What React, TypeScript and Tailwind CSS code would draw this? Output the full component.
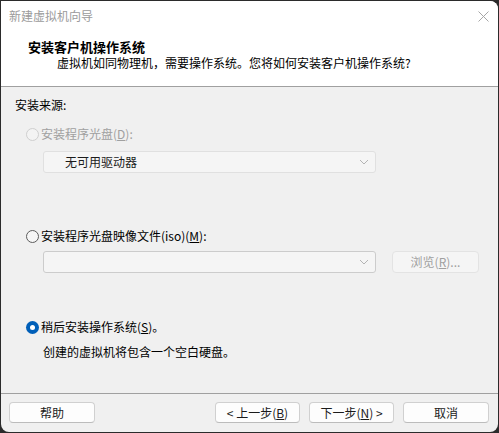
import React from 'react'

const font = { fontFamily: '"Noto Sans CJK SC", "Noto Sans", sans-serif' }

function Radio({ checked, disabled }: { checked?: boolean; disabled?: boolean }) {
  if (checked) {
    return (
      <span className="flex size-[13px] shrink-0 items-center justify-center rounded-full bg-[#005fb8]">
        <span className="size-[5px] rounded-full bg-white" />
      </span>
    )
  }
  return (
    <span
      className={`size-[13px] shrink-0 rounded-full border ${
        disabled ? 'border-[#cfcfcf] bg-[#f3f3f3]' : 'border-[#5c5c5c] bg-[#f6f6f6]'
      }`}
    />
  )
}

function Chevron() {
  return (
    <svg width="10" height="6" viewBox="0 0 10 6" className="shrink-0">
      <path d="M1 1 L5 5 L9 1" fill="none" stroke="#b4b4b4" strokeWidth="1" />
    </svg>
  )
}

function Btn({ children, w = 'w-[86px]' }: { children: React.ReactNode; w?: string }) {
  return (
    <div
      className={`${w} flex h-[21px] items-center justify-center rounded-[4px] border border-[#d0d0d0] border-b-[#bcbcbc] bg-[#fdfdfd] text-[12px] leading-none text-[#1b1b1b]`}
    >
      {children}
    </div>
  )
}

export default function App() {
  return (
    <div className="h-[433px] w-[499px] bg-[#2b2b2b] p-[1px]" style={font}>
      <div className="flex h-full w-full flex-col overflow-hidden rounded-tr-[8px] rounded-b-[8px] bg-[#f0f0f0]">
        {/* title bar + header */}
        <div className="bg-white">
          <div className="flex h-[30px] items-center justify-between pl-[8px] pr-[9px]">
            <span className="text-[12px] text-[#9b9b9b]">新建虚拟机向导</span>
            <svg width="11" height="11" viewBox="0 0 11 11">
              <path d="M0.5 0.5 L10.5 10.5 M10.5 0.5 L0.5 10.5" stroke="#a6a6a6" strokeWidth="1" />
            </svg>
          </div>
          <div className="h-[56px] border-b border-[#a0a0a0] pt-[8px]">
            <div className="pl-[27px] text-[13px] font-bold leading-[16px] text-black">安装客户机操作系统</div>
            <div className="pl-[56px] text-[12px] leading-[16px] text-black">
              虚拟机如同物理机，需要操作系统。您将如何安装客户机操作系统?
            </div>
          </div>
        </div>

        {/* body */}
        <div className="flex-1 text-[12px] leading-[16px] text-black">
          <div className="mt-[10px] pl-[14px]">安装来源:</div>

          <div className="mt-[13px] flex items-center gap-[2px] pl-[25px] text-[#a0a0a0]">
            <Radio disabled />
            <span>
              安装程序光盘(<span className="underline">D</span>):
            </span>
          </div>
          <div className="ml-[42px] mt-[9px] flex h-[22px] w-[333px] items-center justify-between rounded-[3px] border border-[#e0e0e0] bg-[#f5f5f5] pl-[21px] pr-[6px]">
            <span className="text-[#1b1b1b]">无可用驱动器</span>
            <Chevron />
          </div>

          <div className="mt-[55px] flex items-center gap-[2px] pl-[25px]">
            <Radio />
            <span>
              安装程序光盘映像文件(iso)(<span className="underline">M</span>):
            </span>
          </div>
          <div className="ml-[42px] mt-[7px] flex items-center gap-[16px]">
            <div className="flex h-[22px] w-[333px] items-center justify-end rounded-[3px] border border-[#cccccc] bg-[#f5f5f5] pr-[6px]">
              <Chevron />
            </div>
            <div className="flex h-[22px] w-[87px] items-center justify-center rounded-[4px] border border-[#e3e3e3] bg-[#f5f5f5] text-[#a0a0a0]">
              浏览(<span className="underline">R</span>)...
            </div>
          </div>

          <div className="mt-[46px] flex items-center gap-[2px] pl-[25px]">
            <Radio checked />
            <span>
              稍后安装操作系统(<span className="underline">S</span>)。
            </span>
          </div>
          <div className="ml-[42px] mt-[9px]">创建的虚拟机将包含一个空白硬盘。</div>
        </div>

        {/* footer */}
        <div className="flex h-[39px] border-t border-[#a0a0a0] pt-[8px] pl-[8px] pr-[9px]">
          <Btn>帮助</Btn>
          <div className="ml-auto flex gap-[9px]">
            <Btn w="w-[85px]">
              &lt; 上一步(<span className="underline">B</span>)
            </Btn>
            <Btn w="w-[85px]">
              下一步(<span className="underline">N</span>) &gt;
            </Btn>
            <Btn w="w-[86px]">取消</Btn>
          </div>
        </div>
      </div>
    </div>
  )
}
